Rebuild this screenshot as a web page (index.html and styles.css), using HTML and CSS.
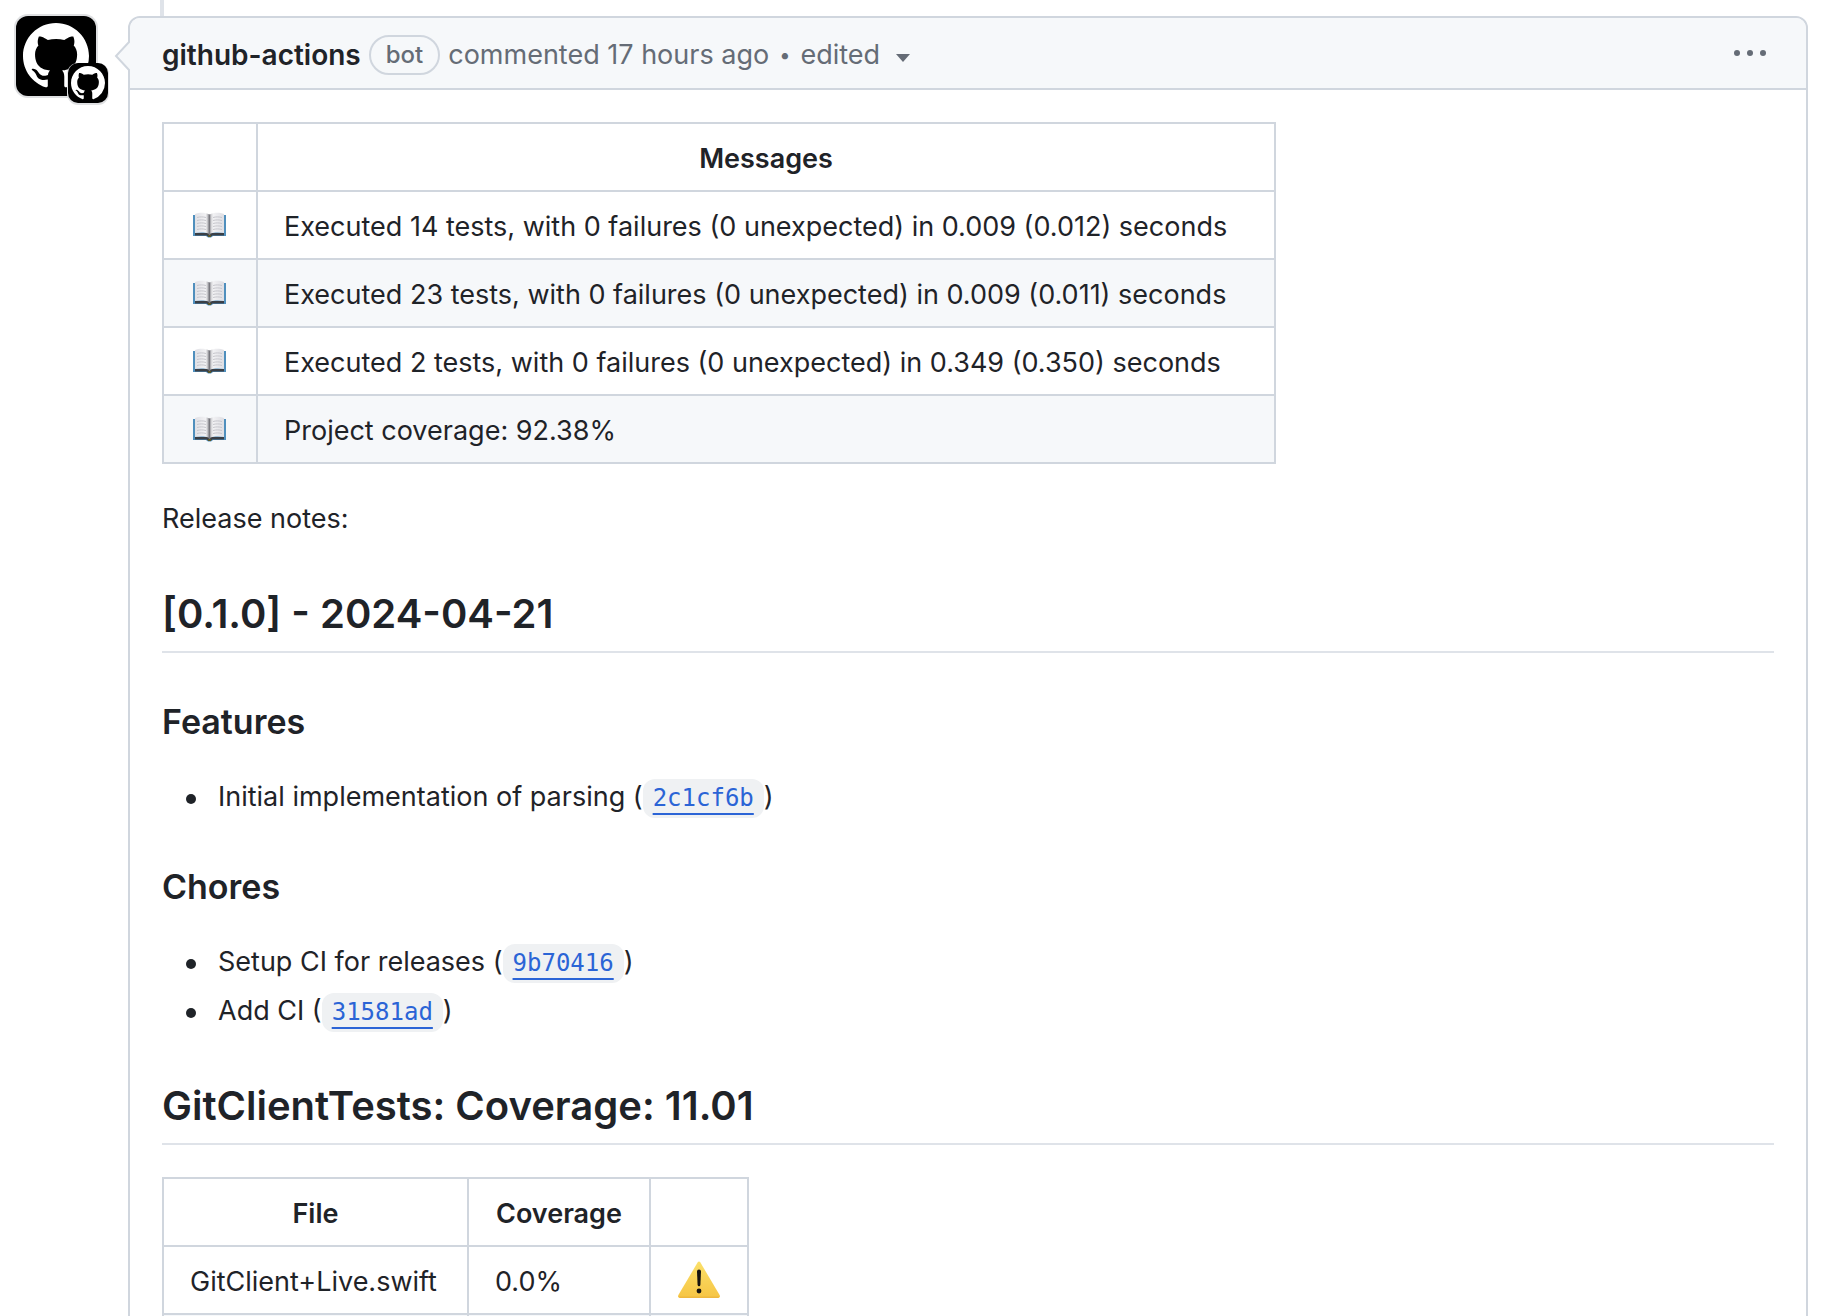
FILE: index.html
```html
<!DOCTYPE html>
<html lang="en">
<head>
<meta charset="utf-8">
<title>github-actions comment</title>
<link rel="stylesheet" href="styles.css">
</head>
<body>
<svg class="defs" aria-hidden="true">
  <symbol id="mark" viewBox="0 0 16 16">
    <path d="M8 0C3.58 0 0 3.58 0 8c0 3.54 2.29 6.53 5.47 7.59.4.07.55-.17.55-.38 0-.19-.01-.82-.01-1.49-2.01.37-2.53-.49-2.69-.94-.09-.23-.48-.94-.82-1.13-.28-.15-.68-.52-.01-.53.63-.01 1.08.58 1.23.82.72 1.21 1.87.87 2.33.66.07-.52.28-.87.51-1.07-1.78-.2-3.64-.89-3.64-3.95 0-.87.31-1.59.82-2.15-.08-.2-.36-1.02.08-2.12 0 0 .67-.21 2.2.82.64-.18 1.32-.27 2-.27s1.36.09 2 .27c1.53-1.04 2.2-.82 2.2-.82.44 1.1.16 1.92.08 2.12.51.56.82 1.27.82 2.15 0 3.07-1.87 3.75-3.65 3.95.29.25.54.73.54 1.48 0 1.07-.01 1.93-.01 2.2 0 .21.15.46.55.38A8.01 8.01 0 0 0 16 8c0-4.42-3.58-8-8-8Z"/>
  </symbol>
  <linearGradient id="page-l" x1="0" x2="1" y1="0" y2="0">
    <stop offset="0" stop-color="#e0e0e5"/><stop offset=".75" stop-color="#f2f2f4"/><stop offset="1" stop-color="#8b8b90"/>
  </linearGradient>
  <linearGradient id="page-r" x1="0" x2="1" y1="0" y2="0">
    <stop offset="0" stop-color="#b4b4b8"/><stop offset=".25" stop-color="#f2f2f4"/><stop offset="1" stop-color="#dedee3"/>
  </linearGradient>
  <linearGradient id="amber" x1="0" x2="0" y1="0" y2="1">
    <stop offset="0" stop-color="#fbe06a"/><stop offset="1" stop-color="#f6c544"/>
  </linearGradient>
  <symbol id="book" viewBox="0 0 40 28">
    <path d="M3 4h33v21H23l-2 1.500h-3L16 25H3z" fill="#4f8fbd"/>
    <path d="M5 22h29v2.500H22.500l-1.500 1h-3l-1.500-1H5z" fill="#3a3f46"/>
    <path d="M5 3C9 1.300 15 1 19.500 3.500V23C15 21 9 21.500 5 22z" fill="url(#page-l)"/>
    <path d="M19.500 3.500C24 1 30 1.300 34 3v19C30 21.500 24 21 19.500 23z" fill="url(#page-r)"/>
    <path d="M7 6.500c3-.8 6-.8 9 0M7 9.500c3-.8 6-.8 9 0M7 12.500c3-.8 6-.8 9 0M7 15.500c3-.8 6-.8 9 0M7 18.500c3-.8 6-.8 9 0M23 6.500c3-.8 6-.8 9 0M23 9.500c3-.8 6-.8 9 0M23 12.500c3-.8 6-.8 9 0M23 15.500c3-.8 6-.8 9 0M23 18.500c3-.8 6-.8 9 0" fill="none" stroke="#c6c6cc" stroke-width="1"/>
    <path d="M19.500 3.500V25" stroke="#77777d" stroke-width="1.500"/>
    <path d="M18 24h3v2h-3z" fill="#5b5626"/>
  </symbol>
  <symbol id="warning" viewBox="0 0 44 38">
    <path d="M20.600 1.500q1.400-2 2.800 0L42.600 34q1.200 3-1.600 3H3q-2.800 0-1.600-3z" fill="url(#amber)"/>
    <path d="M2 35.500h40q0 1.500-1.500 1.500h-37Q2 37 2 35.500z" fill="#eeb83f"/>
    <path d="M20 10.500q0-2 2-2t2 2l-.6 13.500q-.2 1.200-1.400 1.200T20.600 24z" fill="#151310"/>
    <circle cx="22" cy="30" r="2.400" fill="#151310"/>
  </symbol>
</svg>

<main class="timeline">
  <a class="avatars" href="#" aria-label="github-actions">
    <span class="avatar"><svg><use href="#mark"/></svg></span>
    <span class="avatar avatar-small"><svg><use href="#mark"/></svg></span>
  </a>

  <article class="comment">
    <header class="comment-header">
      <svg class="caret" viewBox="0 0 16 32" aria-hidden="true"><path d="M16 1 2 16l14 15"/></svg>
      <a class="author" href="#">github-actions</a>
      <span class="label">bot</span>
      <span class="meta">commented <a href="#">17 hours ago</a></span>
      <span class="dot">•</span>
      <button class="edited" type="button">edited <svg viewBox="0 0 14 8" aria-hidden="true"><path d="M0 0h14L7 8z"/></svg></button>
      <button class="menu" type="button" aria-label="Show options"><svg viewBox="0 0 32 6"><circle cx="3" cy="3" r="3"/><circle cx="16" cy="3" r="3"/><circle cx="29" cy="3" r="3"/></svg></button>
    </header>

    <div class="comment-body">
      <table class="messages">
        <colgroup><col class="col-icon"><col class="col-message"></colgroup>
        <thead><tr><th></th><th>Messages</th></tr></thead>
        <tbody>
          <tr><td><svg class="book" role="img" aria-label="Book"><use href="#book"/></svg></td><td>Executed 14 tests, with 0 failures (0 unexpected) in 0.009 (0.012) seconds</td></tr>
          <tr><td><svg class="book" role="img" aria-label="Book"><use href="#book"/></svg></td><td>Executed 23 tests, with 0 failures (0 unexpected) in 0.009 (0.011) seconds</td></tr>
          <tr><td><svg class="book" role="img" aria-label="Book"><use href="#book"/></svg></td><td>Executed 2 tests, with 0 failures (0 unexpected) in 0.349 (0.350) seconds</td></tr>
          <tr><td><svg class="book" role="img" aria-label="Book"><use href="#book"/></svg></td><td>Project coverage: 92.38%</td></tr>
        </tbody>
      </table>

      <p>Release notes:</p>

      <h2>[0.1.0] - 2024-04-21</h2>
      <h3>Features</h3>
      <ul>
        <li>Initial implementation of parsing (<code><a href="#">2c1cf6b</a></code>)</li>
      </ul>
      <h3>Chores</h3>
      <ul>
        <li>Setup CI for releases (<code><a href="#">9b70416</a></code>)</li>
        <li>Add CI (<code><a href="#">31581ad</a></code>)</li>
      </ul>

      <h2>GitClientTests: Coverage: 11.01</h2>
      <table class="coverage">
        <colgroup><col class="col-file"><col class="col-percent"><col class="col-status"></colgroup>
        <thead><tr><th>File</th><th>Coverage</th><th></th></tr></thead>
        <tbody>
          <tr><td>GitClient+Live.swift</td><td>0.0%</td><td><svg class="warning" role="img" aria-label="Warning"><use href="#warning"/></svg></td></tr>
          <tr><td></td><td></td><td></td></tr>
        </tbody>
      </table>
    </div>
  </article>
</main>
</body>
</html>
```

FILE: styles.css
```css
:root {
  --fg: #1f2328;
  --muted: #656c76;
  --border: #d0d6de;
  --subtle: #f6f8fa;
  --link: #2b64d6;
}

* {
  box-sizing: border-box;
}

body {
  margin: 0;
  height: 100vh;
  overflow: hidden;
  background: #fff;
  color: var(--fg);
  font: 400 27px/42px Inter, "Liberation Sans", sans-serif;
}

.defs {
  position: absolute;
  width: 0;
  height: 0;
}

.timeline {
  position: relative;
  display: flex;
  align-items: flex-start;
  gap: 32px;
  padding: 16px 14px 0 16px;
}

/* thread line that joins the comment to the one above */
.timeline::before {
  content: "";
  position: absolute;
  top: 0;
  left: 160px;
  width: 4px;
  height: 16px;
  background: #dfe3e9;
}

.avatars {
  position: relative;
  flex: none;
  width: 80px;
  height: 80px;
}

.avatar {
  display: grid;
  place-items: center;
  width: 80px;
  height: 80px;
  border-radius: 12px;
  background: #000;
  box-shadow: 0 0 0 2px #dfe0e2;
}

.avatar svg {
  width: 66px;
  height: 66px;
  fill: #fff;
}

.avatar-small {
  position: absolute;
  right: -12px;
  bottom: -7px;
  width: 40px;
  height: 40px;
  border-radius: 10px;
  box-shadow: 0 1px 0 1px #dfe0e2;
}

.avatar-small svg {
  width: 34px;
  height: 34px;
}

.comment {
  flex: 1;
  min-width: 0;
  border: 2px solid var(--border);
  border-radius: 12px;
}

.comment-header {
  position: relative;
  display: flex;
  align-items: center;
  gap: 8px;
  height: 72px;
  padding: 4px 40px 0 32px;
  border-bottom: 2px solid var(--border);
  border-radius: 10px 10px 0 0;
  background: var(--subtle);
  color: var(--muted);
}

.caret {
  position: absolute;
  left: -16px;
  top: 22px;
  width: 16px;
  height: 32px;
  fill: var(--subtle);
  stroke: var(--border);
  stroke-width: 2;
}

.comment-header a {
  color: inherit;
  text-decoration: none;
}

.comment-header .author {
  color: var(--fg);
  font-size: 28px;
  font-weight: 600;
}

.label {
  padding: 0 15px;
  border: 2px solid var(--border);
  border-radius: 20px;
  font-size: 24px;
  font-weight: 500;
  line-height: 36px;
}

.dot {
  padding: 0 2px;
  font-size: 20px;
}

button {
  display: flex;
  align-items: center;
  padding: 0;
  border: 0;
  background: none;
  color: inherit;
  font: inherit;
}

button svg {
  fill: currentColor;
}

.edited {
  gap: 16px;
}

.edited svg {
  width: 14px;
  height: 8px;
  margin-top: 6px;
}

.menu {
  margin: 0 0 4px auto;
}

.menu svg {
  width: 32px;
  height: 6px;
}

.comment-body {
  padding: 32px;
}

table {
  margin: 0 0 34px;
  border-collapse: collapse;
}

p,
ul {
  margin: 0 0 32px;
}

th,
td {
  height: 68px;
  padding: 14px 26px 10px;
  border: 2px solid var(--border);
}

th {
  font-weight: 600;
}

td {
  text-align: left;
}

tbody tr:nth-child(even) {
  background: var(--subtle);
}

td svg {
  display: block;
  margin-top: -4px;
}

.book {
  width: 40px;
  height: 28px;
}

.warning {
  width: 44px;
  height: 38px;
}

.col-icon {
  width: 94px;
}

.col-message {
  width: 1018px;
}

.col-file {
  width: 305px;
}

.col-percent {
  width: 182px;
}

.col-status {
  width: 98px;
}

h2,
h3 {
  font-weight: 600;
}

h2 {
  margin: 48px 0 32px;
  padding-bottom: 11px;
  border-bottom: 2px solid #dfe3e9;
  font-size: 40px;
  line-height: 52px;
}

h3 {
  margin: 48px 0 33px;
  font-size: 34px;
  line-height: 42px;
}

ul {
  padding-left: 56px;
  list-style: none;
}

li::before {
  content: "";
  display: inline-block;
  width: 10px;
  height: 10px;
  margin: 0 22px 0 -32px;
  border-radius: 50%;
  background: currentColor;
  vertical-align: middle;
}

li + li {
  margin-top: 7px;
}

code {
  padding: 5px 10px 6px;
  border-radius: 12px;
  background: #eff1f3;
  font: 24px "DejaVu Sans Mono", "Liberation Mono", monospace;
}

code a {
  color: var(--link);
  text-decoration: underline;
  text-decoration-thickness: 2px;
  text-underline-offset: 7px;
}
```
